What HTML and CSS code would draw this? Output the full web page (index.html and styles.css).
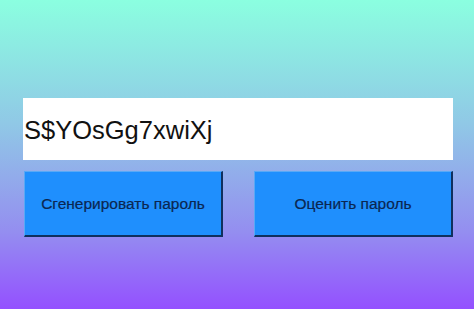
FILE: index.html
```html
<!DOCTYPE html>
<html lang="ru">

<head>
    <meta charset="UTF-8">
    <meta name="viewport" content="width=device-width, initial-scale=1.0">
    <title>Генератор паролей</title>
    <link rel="stylesheet" href="styles.css">
</head>

<body>
    <main class="app">
        <div class="password-field">S$YOsGg7xwiXj</div>
        <div class="actions">
            <button class="btn">Сгенерировать пароль</button>
            <button class="btn">Оценить пароль</button>
        </div>
    </main>
</body>

</html>
```

FILE: styles.css
```css
* {
    margin: 0;
    padding: 0;
    box-sizing: border-box;
}

html,
body {
    height: 100%;
}

body {
    font-family: "Liberation Sans", Arial, sans-serif;
    background: linear-gradient(to bottom, #8bffe0 0%, #90c8e6 40%, #948ef0 75%, #9450ff 100%);
    overflow: hidden;
}

.app {
    padding: 98px 21px 0 23px;
}

/* Password output */
.password-field {
    height: 62px;
    background: #fff;
    color: #111;
    font-size: 25.5px;
    line-height: 62px;
    padding-left: 1px;
    padding-top: 1px;
}

/* Buttons */
.actions {
    display: flex;
    gap: 31px;
    margin-top: 11px;
    padding-left: 1px;
}

.btn {
    width: 199px;
    height: 66px;
    background: #1f8ffd;
    color: #0b2650;
    font-family: "Liberation Sans", Arial, sans-serif;
    font-size: 15.5px;
    -webkit-text-stroke: 0.2px #0b2650;
    border-top: 1px solid #5aa9f5;
    border-left: 1px solid #5aa9f5;
    border-right: 2px solid #10305e;
    border-bottom: 2px solid #10305e;
    cursor: pointer;
}
```
